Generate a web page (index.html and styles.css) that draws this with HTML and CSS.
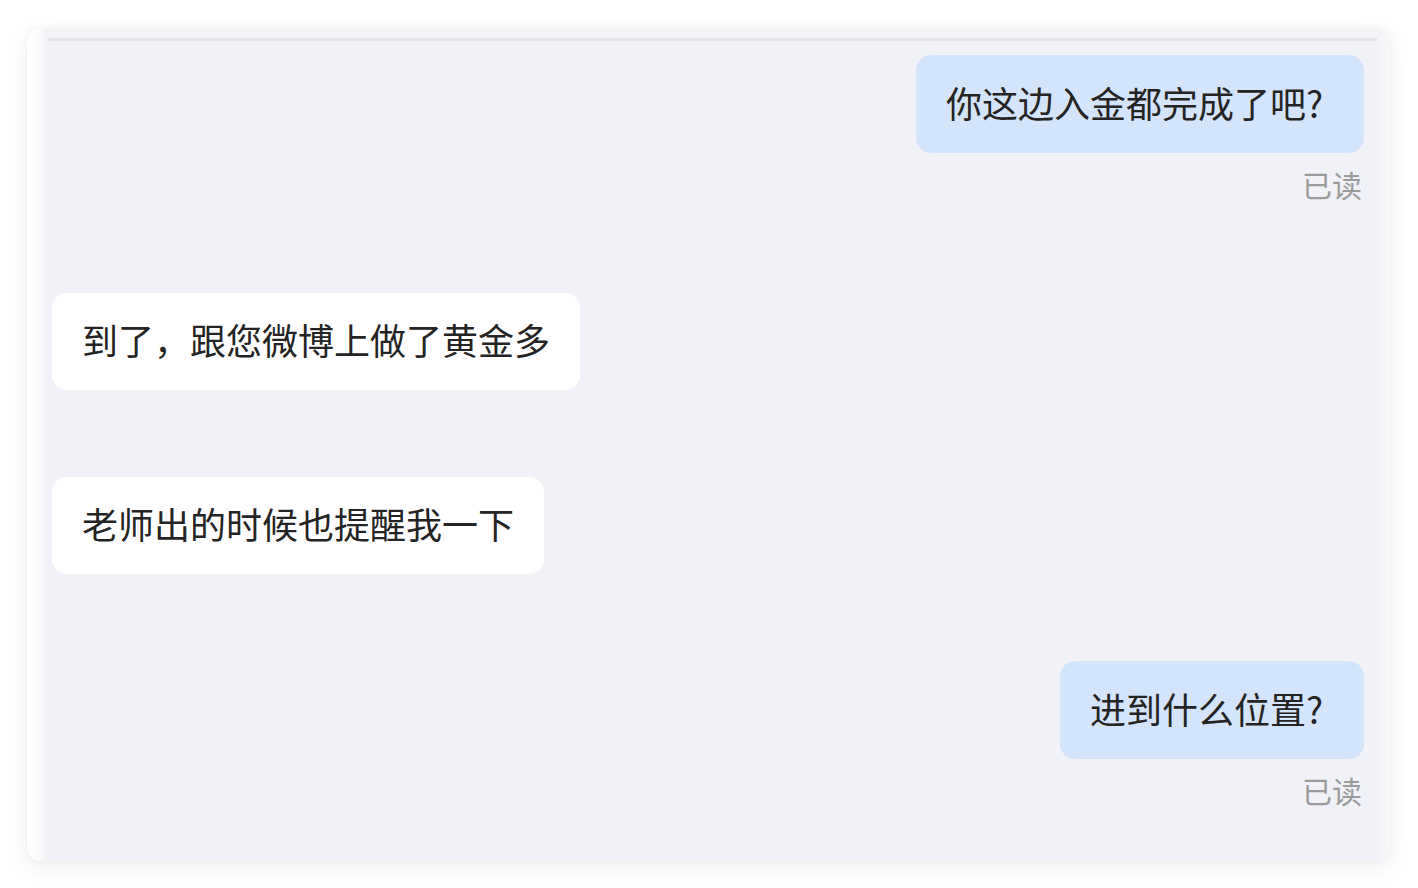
FILE: index.html
```html
<!DOCTYPE html>
<html lang="zh-CN">
<head>
<meta charset="utf-8">
<title>聊天</title>
<link rel="stylesheet" href="styles.css">
</head>
<body>
<div class="page">
  <div class="card">
    <div class="edge-left"></div>
    <div class="panel">
      <div class="msg msg-out first">
        <div class="bubble out">你这边入金都完成了吧<span class="q">?</span></div>
        <div class="receipt">已读</div>
      </div>
      <div class="msg msg-in">
        <div class="bubble in">到了，跟您微博上做了黄金多</div>
      </div>
      <div class="msg msg-in">
        <div class="bubble in">老师出的时候也提醒我一下</div>
      </div>
      <div class="msg msg-out">
        <div class="bubble out">进到什么位置<span class="q">?</span></div>
        <div class="receipt">已读</div>
      </div>
    </div>
    <div class="edge-right"></div>
  </div>
</div>
</body>
</html>
```

FILE: styles.css
```css
html, body {
  margin: 0;
  padding: 0;
  background: #ffffff;
}

body {
  font-family: "Noto Sans CJK SC", "Noto Sans", sans-serif;
  width: 1418px;
  height: 888px;
  overflow: hidden;
}

.page {
  padding: 28px 28px 27px 27px;
  box-sizing: border-box;
  height: 888px;
}

.card {
  display: flex;
  height: 833px;
  border-radius: 14px;
  background: #f3f4f8;
  box-shadow: 0 6px 22px rgba(0, 0, 0, 0.07), 0 0 6px rgba(0, 0, 0, 0.03);
  overflow: hidden;
}

.edge-left {
  width: 21px;
  flex: none;
  background: linear-gradient(to right, #ffffff 0%, #fcfcfd 55%, #eff0f4 100%);
}

.edge-right {
  width: 13px;
  flex: none;
  background: linear-gradient(to right, #f2f3f7 0%, #f8f8fa 100%);
}

.panel {
  flex: 1;
  margin-top: 10px;
  border-top: 3px solid #e1e3e8;
  background: #f1f2f7;
  padding: 14px 13px 0 4px;
  display: flex;
  flex-direction: column;
}

.msg {
  display: flex;
  flex-direction: column;
  margin-top: 87px;
}

.msg.first {
  margin-top: 0;
}

.msg-out {
  align-items: flex-end;
}

.msg-in {
  align-items: flex-start;
}

.bubble {
  font-size: 36px;
  line-height: 94px;
  height: 98px;
  padding: 0 30px 4px;
  border-radius: 15px;
  color: #242424;
  white-space: nowrap;
  box-sizing: border-box;
}

.bubble.out {
  background: #d4e5fb;
}

.bubble.in {
  background: #ffffff;
  height: 97px;
  line-height: 93px;
}

.q {
  display: inline-block;
  padding-right: 11px;
}

.receipt {
  margin-top: 11px;
  margin-bottom: 2px;
  font-size: 30px;
  line-height: 40px;
  color: #9b9b9b;
  padding-right: 2px;
}
```
